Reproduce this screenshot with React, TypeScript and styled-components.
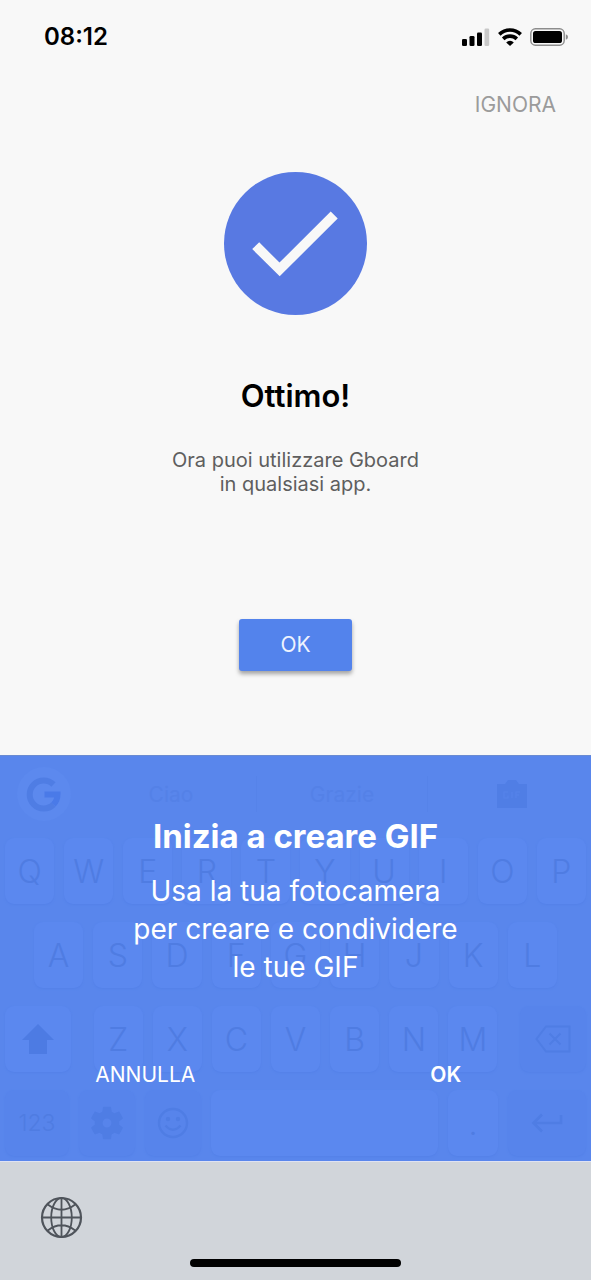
import React from "react";
import styled, { createGlobalStyle, css } from "styled-components";

const GlobalStyle = createGlobalStyle`
  *, *::before, *::after { box-sizing: border-box; }
  body {
    margin: 0;
    background: #f8f8f8;
    font-family: Inter, "Liberation Sans", sans-serif;
  }
  button { font-family: inherit; cursor: pointer; }
  svg { display: block; }
`;

const Screen = styled.div`
  display: flex;
  flex-direction: column;
  min-height: 100vh;
`;

const StatusBar = styled.header`
  display: flex;
  align-items: center;
  justify-content: space-between;
  height: 74px;
  padding: 0 22px 0 44px;
`;

const Clock = styled.time`
  font-size: 24px;
  font-weight: 600;
  line-height: 28px;
  color: #000;
`;

const StatusIcons = styled.div`
  display: flex;
  align-items: center;
  gap: 8px;
`;

const Setup = styled.main`
  flex: 1;
  display: flex;
  flex-direction: column;
  align-items: center;
  padding-bottom: 83px;
`;

const TextButton = styled.button<{ $tone?: string; $strong?: boolean }>`
  padding: 0;
  border: 0;
  background: none;
  font-size: 21px;
  line-height: 28px;
  font-weight: ${(p) => (p.$strong ? 600 : 400)};
  color: ${(p) => p.$tone ?? "#fff"};
`;

const SkipRow = styled.div`
  align-self: stretch;
  display: flex;
  justify-content: flex-end;
  padding: 17px 35px 0 0;
  margin-bottom: 53px;
`;

const Title = styled.h1`
  margin: 61px 0 32px;
  font-size: 31px;
  font-weight: 600;
  line-height: 40px;
  color: #000;
`;

const Message = styled.p`
  margin: 0;
  font-size: 20px;
  line-height: 24px;
  text-align: center;
  color: #5e5e5e;
`;

const RaisedButton = styled.button`
  width: 113px;
  height: 52px;
  margin-top: 123px;
  padding: 0;
  border: 0;
  border-radius: 3px;
  background: #5383ec;
  box-shadow: 0 3px 4px rgba(0, 0, 0, 0.35);
  font-size: 21px;
  line-height: 28px;
  color: #eef3fe;
`;

const Keyboard = styled.section`
  position: relative;
  height: 406px;
  background: #5986ec;
  border-top: 1px solid #6a8bd2;
`;

const Keys = styled.div`
  display: flex;
  flex-direction: column;
  gap: 18px;
  padding: 0 5px;
`;

const Suggestions = styled.div`
  display: flex;
  align-items: center;
  height: 76px;
  padding-left: 12px;
  margin-bottom: 6px;
`;

const Logo = styled.button`
  flex: none;
  display: flex;
  align-items: center;
  justify-content: center;
  width: 54px;
  height: 54px;
  margin-right: 15px;
  padding: 0;
  border: 0;
  border-radius: 50%;
  background: #5c89ee;
`;

const Suggestion = styled.button`
  flex: 0 1 171px;
  height: 36px;
  padding: 0;
  border: 0;
  border-right: 1px solid #5683e9;
  background: none;
  font-size: 21px;
  color: #5481e7;
`;

const CameraSuggestion = styled(Suggestion)`
  flex: 1;
  display: flex;
  align-items: center;
  justify-content: center;
  padding-left: 10px;
  border-right: 0;
`;

const KeyRow = styled.div<{ $inset?: boolean }>`
  display: flex;
  justify-content: space-between;
  gap: 10px;
  padding: 0 ${(p) => (p.$inset ? "29px" : "0")};
`;

const KeyGroup = styled.div`
  flex: 0 1 404px;
  display: flex;
  gap: 10px;
`;

const Key = styled.button<{ $dark?: boolean; $width?: number }>`
  display: flex;
  align-items: center;
  justify-content: center;
  ${(p) => (p.$width ? css`flex: 0 1 ${p.$width}px;` : css`flex: 1;`)}
  min-width: 0;
  height: 66px;
  padding: 0;
  border: 0;
  border-radius: 9px;
  background: ${(p) => (p.$dark ? "#5784eb" : "#5b88ef")};
  box-shadow: 0 1px 2px #5481e8;
  font-size: 32px;
  font-weight: 300;
  color: #4f7ce2;
`;

const SmallLabel = styled.span`
  font-size: 23px;
`;

const Dialog = styled.div`
  position: absolute;
  inset: 0;
  display: flex;
  flex-direction: column;
  align-items: center;
  padding-top: 60px;
  color: #fff;
  text-align: center;
`;

const DialogTitle = styled.h2`
  margin: 0 0 16px;
  font-size: 33px;
  font-weight: 700;
  line-height: 40px;
`;

const DialogText = styled.p`
  margin: 0;
  font-size: 28px;
  line-height: 38px;
`;

const DialogActions = styled.div`
  align-self: stretch;
  display: grid;
  grid-template-columns: 1fr 1fr;
  justify-items: center;
  gap: 10px;
  margin-top: 75px;
`;

const Dock = styled.footer`
  display: flex;
  flex-direction: column;
  justify-content: space-between;
  height: 119px;
  padding: 34px 40px 13px;
  border-top: 1px solid #dfe2f2;
  background: #d1d5da;
`;

const GlobeButton = styled.button`
  align-self: flex-start;
  padding: 0;
  border: 0;
  background: none;
`;

const HomeIndicator = styled.div`
  align-self: center;
  width: 211px;
  height: 8px;
  border-radius: 4px;
  background: #000;
`;

const SignalIcon = () => (
  <svg width="28" height="18" viewBox="0 0 28 18" aria-label="Segnale">
    <rect x="0" y="11" width="5" height="7" rx="1.3" />
    <rect x="7.5" y="8" width="5" height="10" rx="1.3" />
    <rect x="15" y="4.5" width="5" height="13.5" rx="1.3" />
    <rect x="22.5" y="0.5" width="4.7" height="17.5" rx="1.3" fill="#c8c8c8" />
  </svg>
);

const WifiIcon = () => (
  <svg width="24" height="18" viewBox="0 0 24 18" aria-label="Wi-Fi">
    <g fill="none" stroke="#000" strokeWidth="3.6">
      <path d="M1.3 6.4A15.3 15.3 0 0 1 22.7 6.4" />
      <path d="M5.2 10.9A9.8 9.8 0 0 1 18.8 10.9" />
    </g>
    <path d="M12 18L8.2 14.4A5.2 5.2 0 0 1 15.8 14.4Z" />
  </svg>
);

const BatteryIcon = () => (
  <svg width="39" height="18" viewBox="0 0 39 18" aria-label="Batteria">
    <rect x="0.8" y="0.8" width="33.4" height="16.4" rx="4.6" fill="none" stroke="#8d8d8d" strokeWidth="1.4" />
    <rect x="3" y="3" width="29" height="12" rx="2.6" />
    <path d="M35.8 6.2Q38 7 38 9T35.8 11.8Z" fill="#8d8d8d" />
  </svg>
);

const CheckIcon = () => (
  <svg width="143" height="143" viewBox="0 0 143 143" aria-hidden="true">
    <circle cx="71.5" cy="71.5" r="71.5" fill="#5879e2" />
    <path d="M35.2 70.3L55.5 90.6L106.7 39.4L113.7 46.4L55.7 104.3L28.2 77.1Z" fill="#f8f8f8" />
  </svg>
);

const GoogleIcon = () => (
  <svg width="36" height="36" viewBox="0 0 36 36" aria-hidden="true" fill="none" strokeWidth="6">
    <path d="M27.5 8.5A14 14 0 1 0 27.5 28.5" stroke="#4f7de4" />
    <path d="M27.5 28.5Q31.4 24.6 31.5 18.5H18.5" stroke="#4a7ae8" />
  </svg>
);

const CameraIcon = () => (
  <svg width="32" height="30" viewBox="0 0 32 30" aria-hidden="true">
    <path d="M1 5H9L12 1H20L23 5H31V29H1Z" fill="#507ee5" />
    <path d="M12 13H8V19H12V16.5M16 13V19M20 19V13H24M20 16H23" stroke="#5683ea" strokeWidth="1.2" fill="none" />
  </svg>
);

const ShiftIcon = () => (
  <svg width="32" height="30" viewBox="0 0 32 30" aria-hidden="true">
    <path d="M16 0L32 16H25V30H7V16H0Z" fill="#4d7be3" />
  </svg>
);

const BackspaceIcon = () => (
  <svg width="36" height="28" viewBox="0 0 36 28" aria-hidden="true" fill="none" stroke="#4f7de4" strokeWidth="2">
    <path d="M11 1.5H34.5V26.5H11L1.5 14Z" />
    <path d="M14.5 8.5L25.5 19.5M25.5 8.5L14.5 19.5" />
  </svg>
);

const GearIcon = () => (
  <svg width="34" height="34" viewBox="2 2 20 20" aria-hidden="true">
    <path
      d="M19.14 12.94c.04-.3.06-.61.06-.94 0-.32-.02-.64-.07-.94l2.03-1.58c.18-.14.23-.41.12-.61l-1.92-3.32c-.12-.22-.37-.29-.59-.22l-2.39.96c-.5-.38-1.03-.7-1.62-.94l-.36-2.54c-.04-.24-.24-.41-.48-.41h-3.84c-.24 0-.43.17-.47.41l-.36 2.54c-.59.24-1.13.57-1.62.94l-2.39-.96c-.22-.08-.47 0-.59.22L2.74 8.87c-.12.21-.08.47.12.61l2.03 1.58c-.05.3-.09.63-.09.94s.02.64.07.94l-2.03 1.58c-.18.14-.23.41-.12.61l1.92 3.32c.12.22.37.29.59.22l2.39-.96c.5.38 1.03.7 1.62.94l.36 2.54c.05.24.24.41.48.41h3.84c.24 0 .44-.17.47-.41l.36-2.54c.59-.24 1.13-.56 1.62-.94l2.39.96c.22.08.47 0 .59-.22l1.92-3.32c.12-.22.07-.47-.12-.61zM12 14.6A2.6 2.6 0 1 1 12 9.4A2.6 2.6 0 0 1 12 14.6Z"
      fill="#4f7de4"
    />
  </svg>
);

const SmileIcon = () => (
  <svg width="32" height="32" viewBox="0 0 32 32" aria-hidden="true" fill="none" stroke="#4f7de4" strokeWidth="2.4">
    <circle cx="16" cy="16" r="14" />
    <path d="M8.5 18.5Q16 27 23.5 18.5" />
    <circle cx="11" cy="12" r="1" />
    <circle cx="21" cy="12" r="1" />
  </svg>
);

const ReturnIcon = () => (
  <svg width="32" height="20" viewBox="0 0 32 20" aria-hidden="true" fill="none" stroke="#4f7de4" strokeWidth="2.6">
    <path d="M30 2V10H3M11 1.5L2.5 10L11 18.5" />
  </svg>
);

const GlobeIcon = () => (
  <svg width="43" height="43" viewBox="0 0 43 43" aria-hidden="true" fill="none" stroke="#4f545b" strokeWidth="1.8">
    <circle cx="21.5" cy="21.5" r="19.5" strokeWidth="2.2" />
    <ellipse cx="21.5" cy="21.5" rx="10.3" ry="19.5" />
    <path d="M21.5 2V41M2 21.5H41M7.8 8.5Q21.5 19 35.2 8.5M7.8 34.5Q21.5 24 35.2 34.5" />
  </svg>
);

const letters = (row: string) => row.split("").map((l) => <Key key={l}>{l}</Key>);

export default function App() {
  return (
    <Screen>
      <GlobalStyle />
      <StatusBar>
        <Clock>08:12</Clock>
        <StatusIcons>
          <SignalIcon />
          <WifiIcon />
          <BatteryIcon />
        </StatusIcons>
      </StatusBar>
      <Setup>
        <SkipRow>
          <TextButton $tone="#9b9b9b">IGNORA</TextButton>
        </SkipRow>
        <CheckIcon />
        <Title>Ottimo!</Title>
        <Message>
          Ora puoi utilizzare Gboard
          <br />
          in qualsiasi app.
        </Message>
        <RaisedButton>OK</RaisedButton>
      </Setup>
      <Keyboard aria-label="Tastiera">
        <Keys>
          <div>
            <Suggestions>
              <Logo aria-label="Google"><GoogleIcon /></Logo>
              <Suggestion>Ciao</Suggestion>
              <Suggestion>Grazie</Suggestion>
              <CameraSuggestion aria-label="Fotocamera"><CameraIcon /></CameraSuggestion>
            </Suggestions>
            <KeyRow>{letters("QWERTYUIOP")}</KeyRow>
          </div>
          <KeyRow $inset>{letters("ASDFGHJKL")}</KeyRow>
          <KeyRow>
            <Key $width={66} aria-label="Maiuscole"><ShiftIcon /></Key>
            <KeyGroup>{letters("ZXCVBNM")}</KeyGroup>
            <Key $width={66} $dark aria-label="Cancella"><BackspaceIcon /></Key>
          </KeyRow>
          <KeyRow>
            <Key $width={64} $dark><SmallLabel>123</SmallLabel></Key>
            <Key $width={56} $dark aria-label="Impostazioni"><GearIcon /></Key>
            <Key $width={56} $dark aria-label="Emoji"><SmileIcon /></Key>
            <Key aria-label="Spazio" />
            <Key $width={50}>.</Key>
            <Key $width={78} $dark aria-label="Invio"><ReturnIcon /></Key>
          </KeyRow>
        </Keys>
        <Dialog role="dialog" aria-labelledby="gif-title">
          <DialogTitle id="gif-title">Inizia a creare GIF</DialogTitle>
          <DialogText>
            Usa la tua fotocamera
            <br />
            per creare e condividere
            <br />
            le tue GIF
          </DialogText>
          <DialogActions>
            <TextButton>ANNULLA</TextButton>
            <TextButton $strong>OK</TextButton>
          </DialogActions>
        </Dialog>
      </Keyboard>
      <Dock>
        <GlobeButton aria-label="Cambia tastiera"><GlobeIcon /></GlobeButton>
        <HomeIndicator />
      </Dock>
    </Screen>
  );
}
